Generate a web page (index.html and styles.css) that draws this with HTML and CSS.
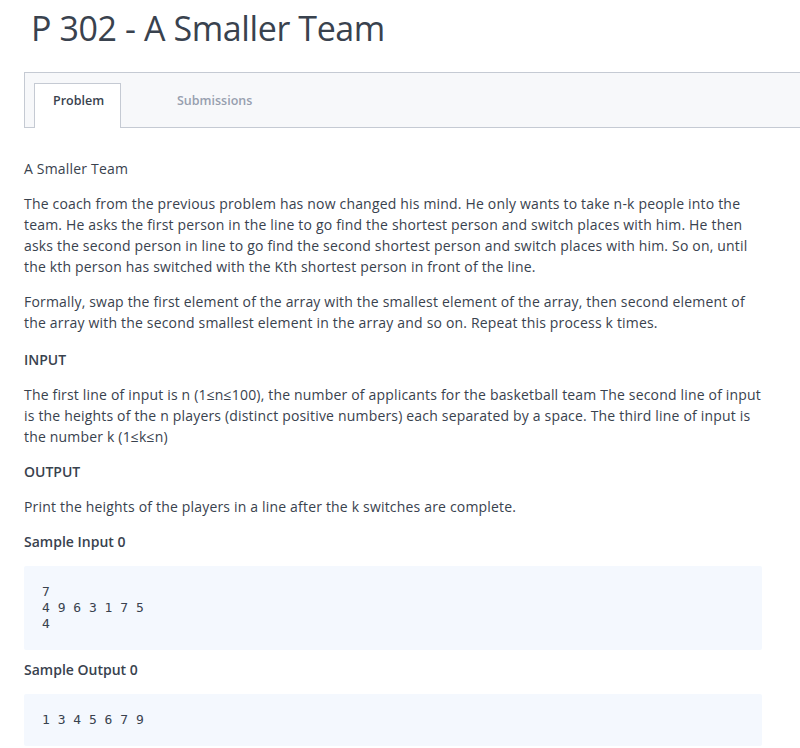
FILE: index.html
```html
<!DOCTYPE html>
<html>
<head>
<meta charset="utf-8">
<link rel="stylesheet" href="styles.css">
</head>
<body>
<h1 class="title">P 302 - A Smaller Team</h1>
<div class="tabs">
  <div class="tab active">Problem</div>
  <div class="tab">Submissions</div>
</div>
<div class="content">
  <p>A Smaller Team</p>
  <p>The coach from the previous problem has now changed his mind. He only wants to take n-k people into the team. He asks the first person in the line to go find the shortest person and switch places with him. He then asks the second person in line to go find the second shortest person and switch places with him. So on, until the kth person has switched with the Kth shortest person in front of the line.</p>
  <p>Formally, swap the first element of the array with the smallest element of the array, then second element of the array with the second smallest element in the array and so on. Repeat this process k times.</p>
  <p class="heading first">INPUT</p>
  <p>The first line of input is n (1≤n≤100), the number of applicants for the basketball team The second line of input is the heights of the n players (distinct positive numbers) each separated by a space. The third line of input is the number k (1≤k≤n)</p>
  <p class="heading">OUTPUT</p>
  <p>Print the heights of the players in a line after the k switches are complete.</p>
  <p class="heading">Sample Input 0</p>
  <pre class="code">7
4 9 6 3 1 7 5
4</pre>
  <p class="heading">Sample Output 0</p>
  <pre class="code">1 3 4 5 6 7 9</pre>
</div>
</body>
</html>
```
FILE: styles.css
```css
html, body {
  margin: 0;
  padding: 0;
  background: #fff;
}
body {
  font-family: "Open Sans", "DejaVu Sans", sans-serif;
  color: #39424e;
  overflow: hidden;
}
.title {
  margin: 0;
  padding: 8px 0 0 31px;
  height: 48px;
  font-size: 34px;
  font-weight: 400;
  line-height: 40px;
  color: #39424e;
  letter-spacing: -0.4px;
}
.tabs {
  margin: 16px -2px 0 24px;
  height: 44px;
  padding: 10px 0 0 9px;
  border: 1px solid #c5cad3;
  background: #f7f8fa;
  display: flex;
  align-items: flex-end;
}
.tab {
  font-size: 12.5px;
  font-weight: 600;
  color: #979faf;
  padding: 0 18px;
  height: 45px;
  line-height: 34px;
  box-sizing: border-box;
  margin-bottom: -1px;
  border: 1px solid transparent;
  border-bottom: none;
}
.tab.active {
  width: 87px;
  color: #39424e;
  background: #fff;
  border-color: #c5cad3;
  margin-right: 37px;
}
.content {
  width: 738px;
  margin: 30px 0 0 24px;
  font-size: 14px;
  line-height: 21px;
  letter-spacing: 0.18px;
}
.content p {
  margin: 0 0 14px;
}
.content p.heading {
  font-weight: 600;
  letter-spacing: 0;
}
.content p.heading.first {
  margin-top: 16px;
}
.code {
  margin: 0 0 9px;
  padding: 18px;
  background: #f4f8fe;
  border-radius: 2px;
  font-family: "DejaVu Sans Mono", monospace;
  font-size: 13px;
  line-height: 16px;
  color: #39424e;
  letter-spacing: 0;
}
```
